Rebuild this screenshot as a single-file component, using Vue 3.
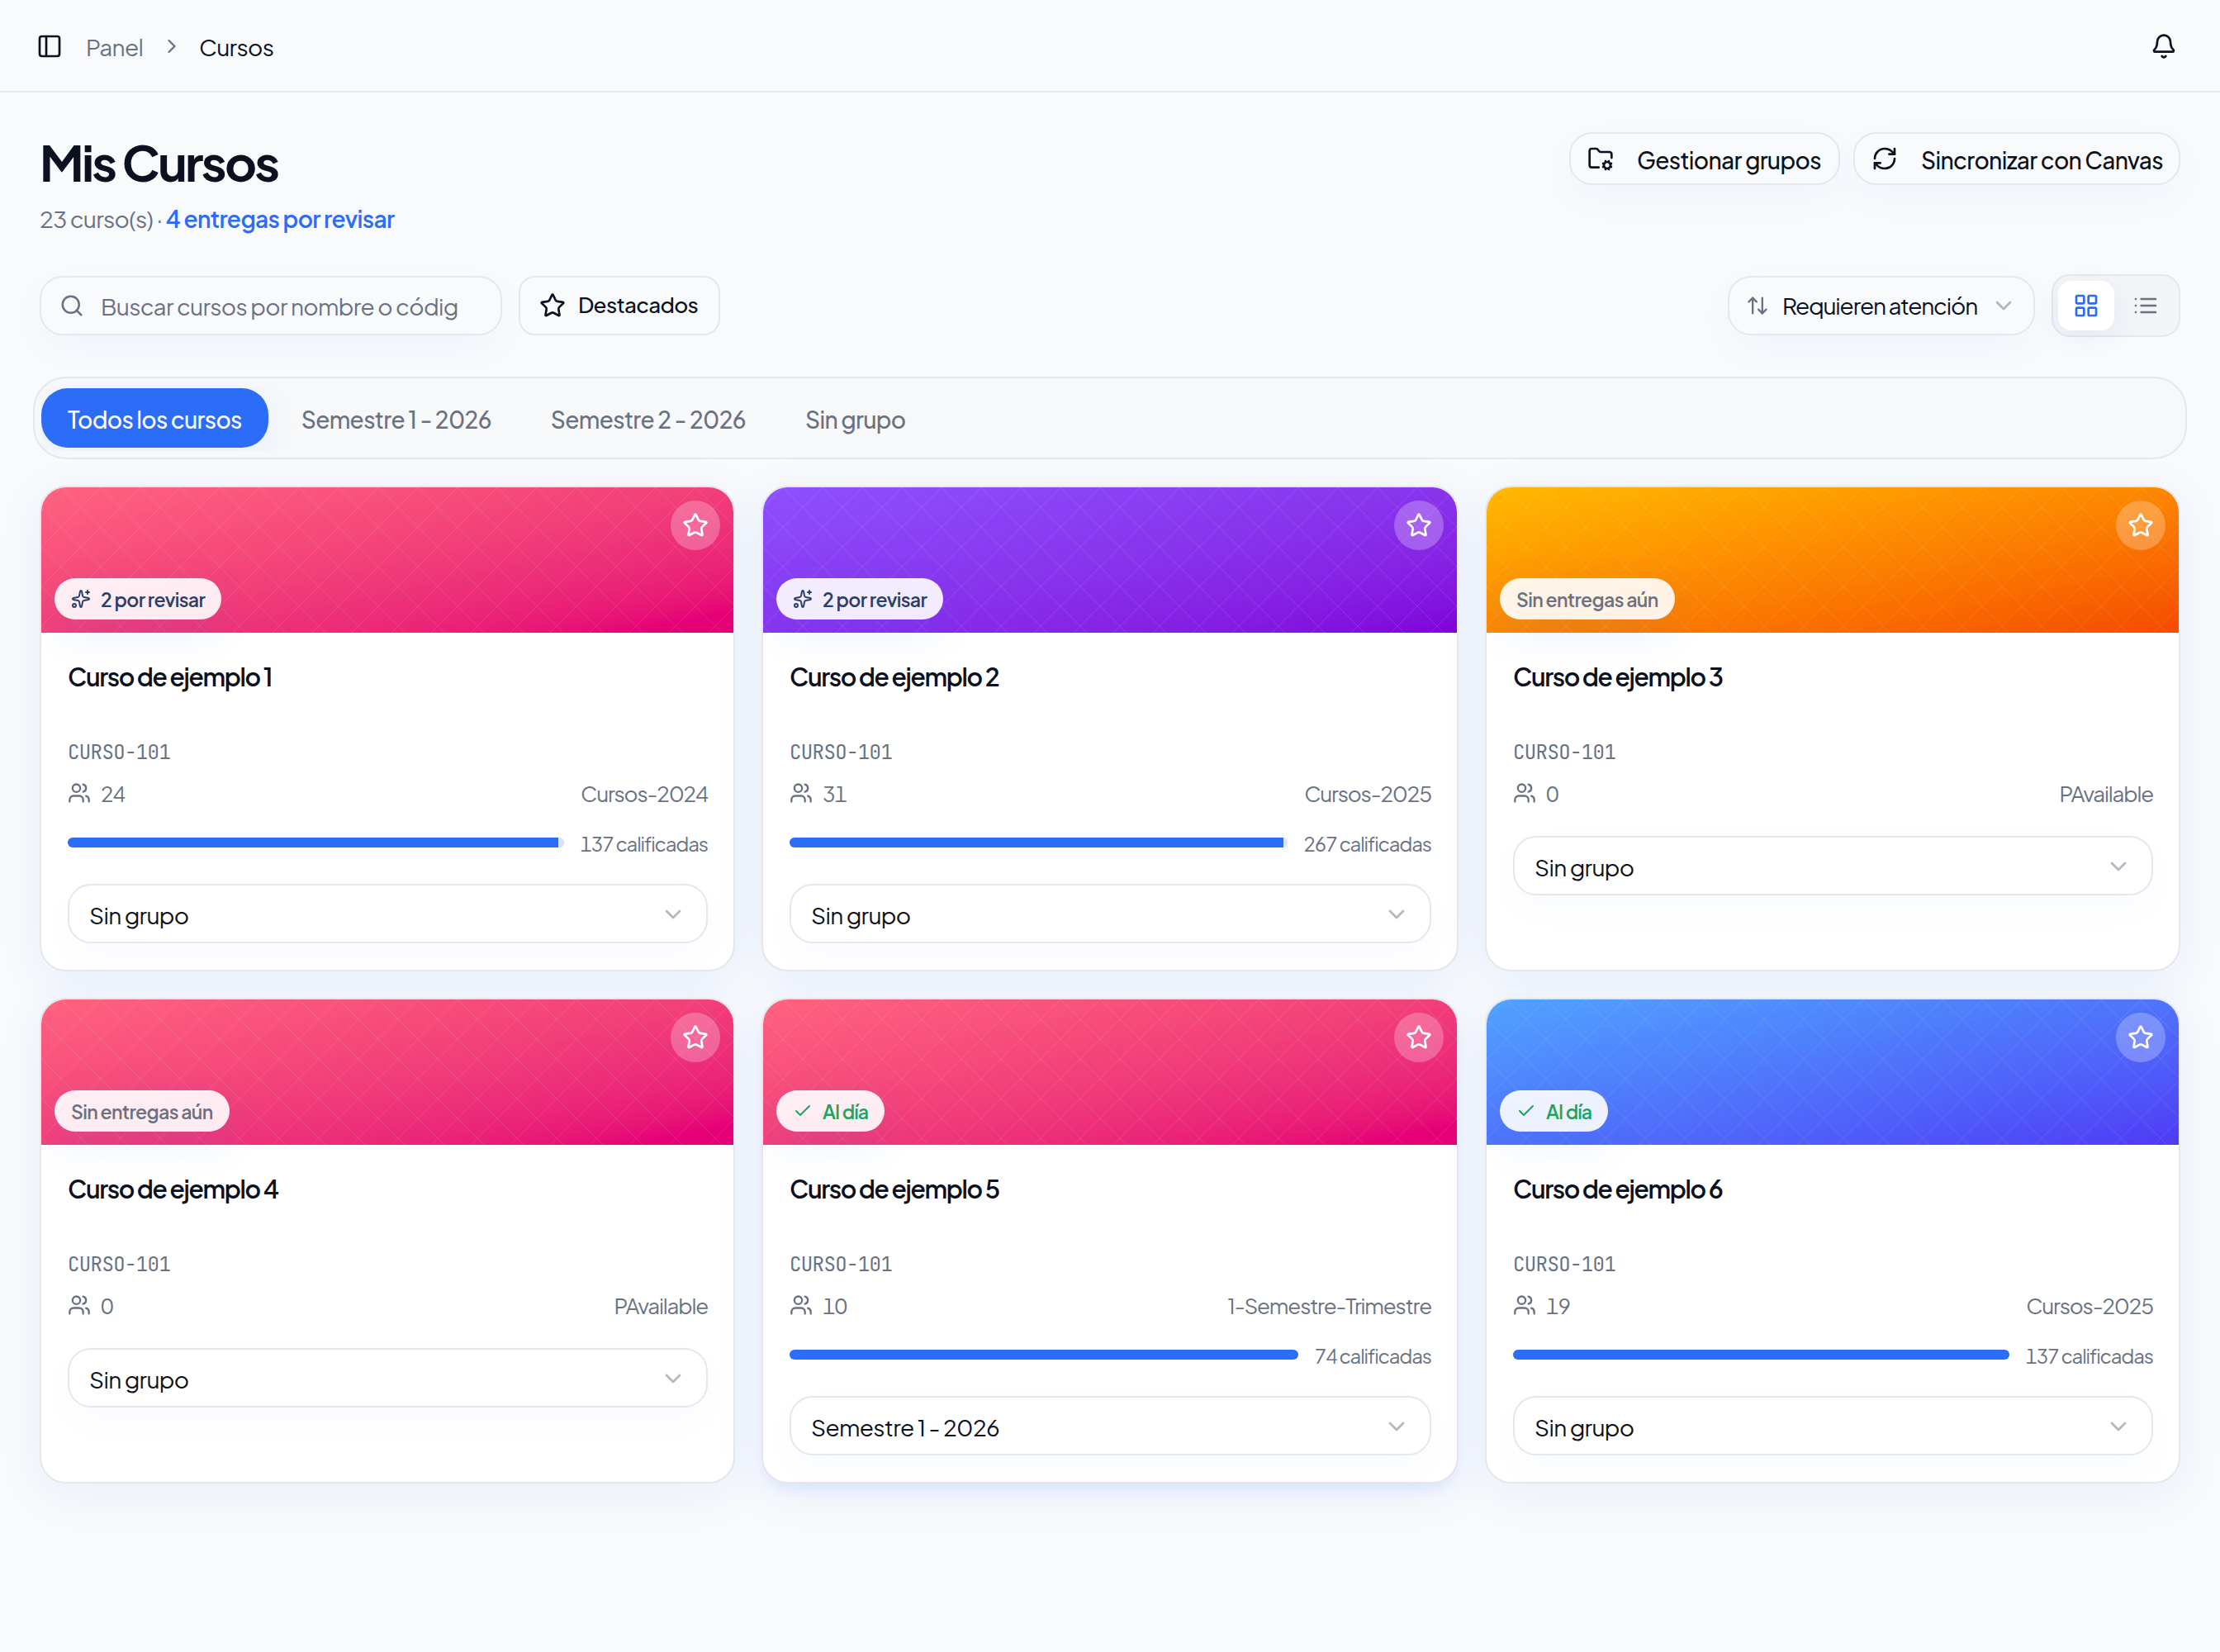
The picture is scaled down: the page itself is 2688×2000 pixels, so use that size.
<template>
  <div class="page">
    <!-- Barra superior -->
    <header class="topbar">
      <div class="crumbs">
        <svg class="icon" viewBox="0 0 24 24"><rect x="3" y="3" width="18" height="18" rx="2" /><path d="M9 3v18" /></svg>
        <span class="crumb">Panel</span>
        <svg class="icon crumb-sep" viewBox="0 0 24 24"><path d="m9 18 6-6-6-6" /></svg>
        <span class="crumb current">Cursos</span>
      </div>
      <svg class="icon" viewBox="0 0 24 24">
        <path d="M10.268 21a2 2 0 0 0 3.464 0" />
        <path d="M3.262 15.326A1 1 0 0 0 4 17h16a1 1 0 0 0 .74-1.673C19.41 13.956 18 12.499 18 8A6 6 0 0 0 6 8c0 4.499-1.411 5.956-2.738 7.326" />
      </svg>
    </header>

    <main class="content">
      <!-- Título y acciones -->
      <div class="heading">
        <div>
          <h1 class="title">Mis Cursos</h1>
          <p class="subtitle"><span class="total">23 curso(s) ·</span> <strong class="pending">4 entregas por revisar</strong></p>
        </div>
        <div class="actions">
          <button class="action manage">
            <svg class="icon" viewBox="0 0 24 24">
              <path d="M10.3 20H4a2 2 0 0 1-2-2V5a2 2 0 0 1 2-2h3.9a2 2 0 0 1 1.69.9l.81 1.2a2 2 0 0 0 1.67.9H20a2 2 0 0 1 2 2v3.3" />
              <path d="m14.305 19.53.923-.382" /><path d="m15.228 16.852-.923-.383" />
              <path d="m16.852 15.228-.383-.923" /><path d="m16.852 20.772-.383.924" />
              <path d="m19.148 15.228.383-.923" /><path d="m19.53 21.696-.382-.924" />
              <path d="m20.772 16.852.924-.383" /><path d="m20.772 19.148.924.383" />
              <circle cx="18" cy="18" r="3" />
            </svg>
            <span>Gestionar grupos</span>
          </button>
          <button class="action sync">
            <svg class="icon" viewBox="0 0 24 24">
              <path d="M3 12a9 9 0 0 1 9-9 9.75 9.75 0 0 1 6.74 2.74L21 8" /><path d="M21 3v5h-5" />
              <path d="M21 12a9 9 0 0 1-9 9 9.75 9.75 0 0 1-6.74-2.74L3 16" /><path d="M8 16H3v5" />
            </svg>
            <span>Sincronizar con Canvas</span>
          </button>
        </div>
      </div>

      <!-- Búsqueda, orden y vista -->
      <div class="toolbar">
        <div class="search">
          <svg class="icon" viewBox="0 0 24 24"><circle cx="11" cy="11" r="8" /><path d="m21 21-4.3-4.3" /></svg>
          <span>Buscar cursos por nombre o códig</span>
        </div>
        <button class="starred">
          <svg class="icon" viewBox="0 0 24 24"><path :d="starPath" /></svg>
          <span>Destacados</span>
        </button>
        <div class="sort">
          <svg class="icon small" viewBox="0 0 24 24"><path d="m3 8 4-4 4 4" /><path d="M7 4v16" /><path d="m21 16-4 4-4-4" /><path d="M17 20V4" /></svg>
          <span class="sort-label">Requieren atención</span>
          <svg class="icon chevron" viewBox="0 0 24 24"><path d="m6 9 6 6 6-6" /></svg>
        </div>
        <div class="views">
          <button class="view active">
            <svg class="icon" viewBox="0 0 24 24">
              <rect x="3" y="3" width="7" height="7" rx="1" /><rect x="14" y="3" width="7" height="7" rx="1" />
              <rect x="14" y="14" width="7" height="7" rx="1" /><rect x="3" y="14" width="7" height="7" rx="1" />
            </svg>
          </button>
          <button class="view">
            <svg class="icon" viewBox="0 0 24 24"><path d="M3 12h.01M3 18h.01M3 6h.01M8 12h13M8 18h13M8 6h13" /></svg>
          </button>
        </div>
      </div>

      <!-- Grupos -->
      <nav class="tabs">
        <div class="tabs-scroll">
          <button v-for="tab in tabs" :key="tab" class="tab" :class="{ active: tab === currentTab }">
            <span>{{ tab }}</span>
          </button>
        </div>
      </nav>

      <!-- Cursos -->
      <div class="grid">
        <article v-for="course in courses" :key="course.id" class="card" :class="{ raised: course.raised }">
          <div class="cover" :class="course.color">
            <svg class="pattern">
              <defs>
                <pattern :id="'mesh-' + course.id" width="48" height="48" patternUnits="userSpaceOnUse">
                  <path d="M24 0 48 24 24 48 0 24Z" fill="none" stroke="#fff" stroke-width="1" />
                </pattern>
              </defs>
              <rect width="100%" height="100%" :fill="`url(#mesh-${course.id})`" />
            </svg>
            <button class="fav">
              <svg class="icon" viewBox="0 0 24 24"><path :d="starPath" /></svg>
            </button>
            <div class="badge" :class="course.status">
              <svg v-if="course.status === 'review'" class="icon tiny" viewBox="0 0 24 24">
                <path d="M11.017 2.814a1 1 0 0 1 1.966 0l1.051 5.558a2 2 0 0 0 1.594 1.594l5.558 1.051a1 1 0 0 1 0 1.966l-5.558 1.051a2 2 0 0 0-1.594 1.594l-1.051 5.558a1 1 0 0 1-1.966 0l-1.051-5.558a2 2 0 0 0-1.594-1.594l-5.558-1.051a1 1 0 0 1 0-1.966l5.558-1.051a2 2 0 0 0 1.594-1.594z" />
                <path d="M20 2v4" /><path d="M22 4h-4" /><circle cx="4" cy="20" r="2" />
              </svg>
              <svg v-else-if="course.status === 'done'" class="icon tiny" viewBox="0 0 24 24"><path d="M20 6 9 17l-5-5" /></svg>
              <span>{{ statusText[course.status] }}</span>
            </div>
          </div>
          <div class="body">
            <h2 class="name">Curso de ejemplo {{ course.id }}</h2>
            <div class="code">CURSO-101</div>
            <div class="meta">
              <svg class="icon small" viewBox="0 0 24 24">
                <path d="M16 21v-2a4 4 0 0 0-4-4H6a4 4 0 0 0-4 4v2" /><path d="M16 3.128a4 4 0 0 1 0 7.744" />
                <path d="M22 21v-2a4 4 0 0 0-3-3.87" /><circle cx="9" cy="7" r="4" />
              </svg>
              <span class="students">{{ course.students }}</span>
              <span class="term">{{ course.term }}</span>
            </div>
            <div v-if="course.graded" class="progress">
              <div class="track"><div class="fill" :style="{ width: course.progress + '%' }"></div></div>
              <span class="graded">{{ course.graded }} calificadas</span>
            </div>
            <div class="select">
              <span>{{ course.group }}</span>
              <svg class="icon chevron" viewBox="0 0 24 24"><path d="m6 9 6 6 6-6" /></svg>
            </div>
          </div>
        </article>
      </div>
    </main>
  </div>
</template>

<script setup>
import { ref } from 'vue'

const tabs = ['Todos los cursos', 'Semestre 1 - 2026', 'Semestre 2 - 2026', 'Sin grupo']
const currentTab = ref('Todos los cursos')

const statusText = {
  review: '2 por revisar',
  empty: 'Sin entregas aún',
  done: 'Al día'
}

const courses = [
  { id: 1, color: 'pink', status: 'review', students: 24, term: 'Cursos-2024', graded: 137, progress: 99, group: 'Sin grupo' },
  { id: 2, color: 'violet', status: 'review', students: 31, term: 'Cursos-2025', graded: 267, progress: 99.3, group: 'Sin grupo' },
  { id: 3, color: 'orange', status: 'empty', students: 0, term: 'PAvailable', group: 'Sin grupo' },
  { id: 4, color: 'pink', status: 'empty', students: 0, term: 'PAvailable', group: 'Sin grupo' },
  { id: 5, color: 'pink', status: 'done', students: 10, term: '1-Semestre-Trimestre', graded: 74, progress: 100, group: 'Semestre 1 - 2026', raised: true },
  { id: 6, color: 'blue', status: 'done', students: 19, term: 'Cursos-2025', graded: 137, progress: 100, group: 'Sin grupo' }
]

const starPath = 'M11.525 2.295a.53.53 0 0 1 .95 0l2.31 4.679a2.123 2.123 0 0 0 1.595 1.16l5.166.756a.53.53 0 0 1 .294.904l-3.736 3.638a2.123 2.123 0 0 0-.611 1.878l.882 5.14a.53.53 0 0 1-.771.56l-4.618-2.428a2.122 2.122 0 0 0-1.973 0L6.396 21.01a.53.53 0 0 1-.77-.56l.881-5.139a2.122 2.122 0 0 0-.611-1.879L2.16 9.795a.53.53 0 0 1 .294-.906l5.165-.755a2.122 2.122 0 0 0 1.597-1.16z'
</script>

<style>
body {
  background: #f9fafc;
}
</style>

<style scoped>
* {
  box-sizing: border-box;
}

.page {
  min-height: 2000px;
  background: #f9fafc;
  color: #0c1120;
  font-family: 'Plus Jakarta Sans', Inter, sans-serif;
  font-size: 28px;
  letter-spacing: -0.65px;
}

h1,
h2,
p {
  margin: 0;
}

button {
  font: inherit;
  color: inherit;
  letter-spacing: inherit;
  padding: 0;
  border: 0;
  background: none;
}

span,
strong {
  white-space: nowrap;
}

.icon {
  width: 32px;
  height: 32px;
  flex: none;
  fill: none;
  stroke: currentColor;
  stroke-width: 2;
  stroke-linecap: round;
  stroke-linejoin: round;
}

.icon.small {
  width: 28px;
  height: 28px;
}

.icon.tiny {
  width: 24px;
  height: 24px;
}

.icon.chevron {
  margin-left: auto;
  color: #6a7282;
  opacity: 0.5;
}

.topbar {
  display: flex;
  align-items: center;
  justify-content: space-between;
  height: 112px;
  padding: 2px 52px 0 44px;
  border-bottom: 2px solid #e5e7eb;
}

.crumbs {
  display: flex;
  align-items: center;
}

.crumb {
  width: 70px;
  margin-left: 28px;
  padding-top: 1px;
  color: #6a7282;
}

.crumb.current {
  color: #0c1120;
}

.icon.crumb-sep {
  width: 28px;
  height: 28px;
  margin-left: 20px;
  color: #6a7282;
}

.crumb-sep + .crumb {
  margin-left: 19px;
}

.content {
  padding: 48px 48px 0;
}

.heading {
  display: flex;
  justify-content: space-between;
  align-items: flex-start;
}

.title {
  font-size: 60px;
  line-height: 72px;
  font-weight: 700;
  letter-spacing: -2.7px;
}

.subtitle {
  margin-top: 13px;
  line-height: 40px;
  color: #6a7282;
}

.pending {
  color: #2b6df6;
  font-weight: 600;
}

.actions {
  display: flex;
  gap: 16px;
}

.action {
  display: flex;
  align-items: center;
  gap: 28px;
  width: 328px;
  height: 64px;
  padding: 2px 0 0 20px;
  border: 2px solid #e5e7eb;
  border-radius: 28px;
  background: #f9fafc;
  font-weight: 500;
  box-shadow: 0 16px 48px -4px rgba(43, 109, 246, 0.05);
}

.action .icon {
  margin-top: -2px;
}

.action.sync {
  width: 396px;
}

.toolbar {
  display: flex;
  align-items: center;
  height: 76px;
  margin-top: 47px;
}

.search {
  display: flex;
  align-items: center;
  gap: 20px;
  width: 560px;
  height: 72px;
  padding-left: 22px;
  border: 2px solid #e5e7eb;
  border-radius: 28px;
  color: #6a7282;
  background: #f9fafc;
  box-shadow: 0 16px 48px -4px rgba(43, 109, 246, 0.05);
}

.search .icon {
  width: 30px;
  height: 30px;
}

.starred {
  display: flex;
  align-items: center;
  gap: 15px;
  width: 244px;
  height: 72px;
  margin-left: 20px;
  padding-left: 23px;
  border: 2px solid #e5e7eb;
  border-radius: 20px;
  font-size: 26px;
  font-weight: 500;
}

.starred span {
  margin-top: -4px;
}

.sort {
  display: flex;
  align-items: center;
  width: 372px;
  height: 72px;
  margin-left: auto;
  padding: 0 20px;
  border: 2px solid #e5e7eb;
  border-radius: 28px;
  background: #f9fafc;
  letter-spacing: -1.17px;
  box-shadow: 0 16px 48px -4px rgba(43, 109, 246, 0.05);
}

.sort .small {
  color: #6a7282;
}

.sort-label {
  margin-top: -2px;
  margin-left: 16px;
}

.views {
  display: flex;
  gap: 4px;
  height: 76px;
  margin-left: 20px;
  padding: 6px;
  border: 2px solid #e5e7eb;
  border-radius: 22px;
  background: #f3f4f6;
}

.view {
  display: flex;
  align-items: center;
  justify-content: center;
  width: 68px;
  height: 60px;
  border-radius: 16px;
  color: #6a7282;
}

.view.active {
  color: #2b6df6;
  background: #fff;
  box-shadow: 0 8px 32px rgba(43, 109, 246, 0.08);
}

.tabs {
  height: 100px;
  margin: 48px -8px 0;
  padding: 8px;
  border: 2px solid #e5e7eb;
  border-radius: 40px;
  background: #f7f8fa;
}

.tabs-scroll {
  display: flex;
  gap: 8px;
  height: 80px;
  padding-top: 4px;
  overflow: hidden;
}

.tab {
  height: 72px;
  padding: 2px 32px 0;
  border-radius: 32px;
  color: #6a7282;
  font-weight: 500;
}

.tab.active {
  color: #fff;
  background: #2b6df6;
  box-shadow: 0 8px 40px rgba(43, 109, 246, 0.08);
}

.grid {
  display: grid;
  grid-template-columns: 842px 844px 842px;
  gap: 32px;
  margin-top: 32px;
}

.card {
  height: 588px;
  border: 2px solid #e5e7eb;
  border-radius: 32px;
  background: #fff;
  overflow: hidden;
  box-shadow: 0 12px 56px rgba(43, 109, 246, 0.09);
}

.card.raised {
  box-shadow: 0 12px 56px rgba(43, 109, 246, 0.09), 0 12px 16px -6px rgba(43, 109, 246, 0.1);
}

.cover {
  position: relative;
  height: 176px;
}

.cover.pink {
  background: linear-gradient(to bottom right in oklab, #ff637e, #e60076 93%);
}

.cover.violet {
  background: linear-gradient(to bottom right in oklab, #8e51ff, #8200db);
}

.cover.orange {
  background: linear-gradient(to bottom right in oklab, #ffb900, #f54a00);
}

.cover.blue {
  background: linear-gradient(to bottom right in oklab, #51a2ff, #4f39f6);
}

.pattern {
  display: block;
  width: 100%;
  height: 100%;
  opacity: 0.11;
}

.fav {
  position: absolute;
  top: 16px;
  right: 16px;
  display: flex;
  align-items: center;
  justify-content: center;
  width: 60px;
  height: 60px;
  border-radius: 50%;
  color: #fff;
  background: rgba(255, 255, 255, 0.25);
}

.badge {
  position: absolute;
  left: 16px;
  bottom: 16px;
  display: flex;
  align-items: center;
  gap: 12px;
  height: 50px;
  padding: 0 20px;
  border-radius: 25px;
  background: rgba(255, 255, 255, 0.9);
  color: #6a7282;
  font-size: 23px;
  font-weight: 600;
  letter-spacing: -0.64px;
  box-shadow: 0 16px 48px rgba(43, 109, 246, 0.1);
}

.badge.review {
  color: #2a4066;
}

.badge.done {
  color: #1fa45f;
}

.body {
  padding: 32px 31px 0 32px;
}

.name {
  height: 97px;
  font-size: 30px;
  line-height: 42px;
  font-weight: 600;
  letter-spacing: -1.35px;
}

.code {
  font-family: 'JetBrains Mono', 'DejaVu Sans Mono', monospace;
  font-size: 24px;
  line-height: 32px;
  letter-spacing: -0.6px;
  color: #6a7282;
}

.meta {
  display: flex;
  align-items: center;
  height: 40px;
  margin-top: 13px;
  color: #6a7282;
  font-size: 26px;
  letter-spacing: -1.17px;
}

.students {
  margin-left: 12px;
  font-variant-numeric: tabular-nums;
}

.term {
  margin-left: auto;
}

.progress {
  display: flex;
  align-items: center;
  gap: 20px;
  height: 32px;
  margin-top: 24px;
}

.progress + .select {
  margin-top: 34px;
}

.track {
  flex: 1;
  height: 12px;
  border-radius: 6px;
  background: #d5e2fd;
  overflow: hidden;
}

.fill {
  height: 100%;
  background: #2b6df6;
}

.graded {
  padding-top: 2px;
  color: #6a7282;
  font-size: 24px;
  letter-spacing: -1.08px;
  font-variant-numeric: tabular-nums;
}

.select {
  display: flex;
  align-items: center;
  height: 72px;
  margin-top: 32px;
  padding: 2px 24px 0;
  border: 2px solid #e5e7eb;
  border-radius: 28px;
  box-shadow: 0 16px 48px -4px rgba(43, 109, 246, 0.03);
}
</style>
